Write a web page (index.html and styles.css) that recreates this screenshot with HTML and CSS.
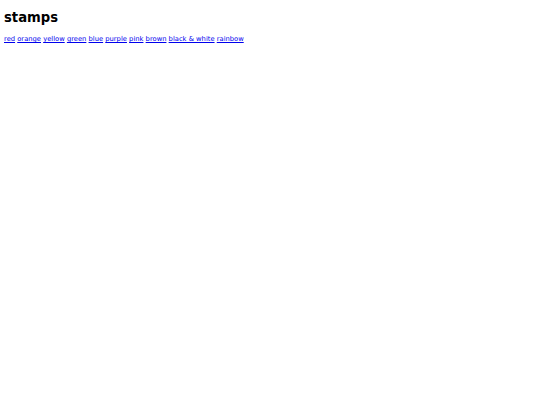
FILE: index.html
```
<!DOCTYPE html>
<html>
<head>
<meta charset="utf-8">
<link rel="stylesheet" href="styles.css">
</head>
<body class="page">
<h1 class="title">stamps</h1>
<nav class="colors">
<a href="#">red</a> <a href="#">orange</a> <a href="#">yellow</a> <a href="#">green</a> <a href="#">blue</a> <a href="#">purple</a> <a href="#">pink</a> <a href="#">brown</a> <a href="#">black &amp; white</a> <a href="#">rainbow</a>
</nav>
</body>
</html>
```
FILE: styles.css
```
.page {
  margin: 0;
  padding: 9px 4px;
  font-family: "DejaVu Sans", sans-serif;
  background: #fff;
  color: #000;
}
.title {
  font-size: 13.2px;
  font-weight: bold;
  margin: 0 0 9px 0;
  line-height: 17px;
}
.colors {
  font-size: 6.75px;
  line-height: 9px;
}
.colors a {
  color: #0000ee;
}
```
